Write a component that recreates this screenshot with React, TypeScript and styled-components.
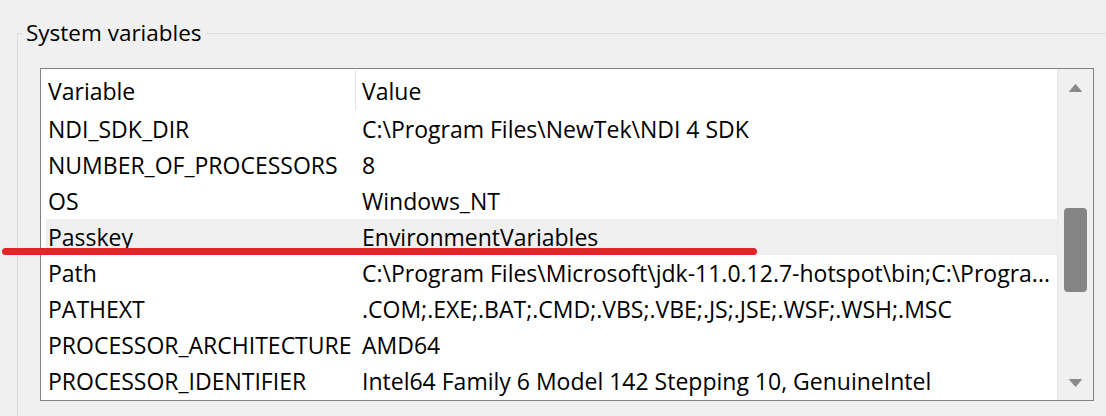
import React from "react";
import styled, { createGlobalStyle } from "styled-components";

const Global = createGlobalStyle`
  html, body { margin: 0; padding: 0; background: #f0f0f0; }
  body { font-family: "Open Sans", "Noto Sans", sans-serif; color: #000; }
  * { box-sizing: border-box; }
`;

const Page = styled.div`
  position: relative;
  width: 1106px;
  height: 416px;
  overflow: hidden;
  padding: 19px 0 0 17px;
`;

const Group = styled.fieldset`
  margin: 0;
  padding: 0;
  min-width: 0;
  height: 420px;
  border: 1px solid #dcdcdc;
  border-right: none;
  border-bottom: none;
`;

const Legend = styled.legend`
  margin-left: 4px;
  padding: 0 4px;
  font-size: 22.5px;
  line-height: 28px;
  color: #000;
`;

const ListBox = styled.div`
  margin: 21px 0 0 22px;
  width: 1054px;
  height: 333px;
  border: 1px solid #828282;
  background: #fff;
  display: grid;
  grid-template-columns: 1fr 35px;
`;

const List = styled.div`
  display: flex;
  flex-direction: column;
  padding-left: 5px;
  border-right: 1px solid #e8e8e8;
`;

const Header = styled.div`
  height: 42px;
  display: grid;
  grid-template-columns: 310px 1fr;
  font-size: 23px;
`;

const HeadCell = styled.div<{ $first?: boolean }>`
  display: flex;
  align-items: center;
  padding-left: ${(p) => (p.$first ? "2px" : "6px")};
  padding-top: 2px;
  border-right: ${(p) => (p.$first ? "1px solid #e5e5e5" : "none")};
  margin: 1px 0;
  white-space: nowrap;
`;

const Row = styled.div<{ $selected?: boolean }>`
  height: 36px;
  display: grid;
  grid-template-columns: 310px 1fr;
  font-size: 23px;
  background: ${(p) => (p.$selected ? "#f0f0f0" : "transparent")};
`;

const Cell = styled.div<{ $first?: boolean }>`
  display: flex;
  align-items: center;
  padding-left: ${(p) => (p.$first ? "2px" : "6px")};
  padding-top: 0px;
  white-space: nowrap;
  overflow: hidden;
`;

const ScrollBar = styled.div`
  background: #f0f0f0;
  display: flex;
  flex-direction: column;
`;

const ArrowButton = styled.div<{ $h: number }>`
  height: ${(p) => p.$h}px;
  display: flex;
  align-items: center;
  justify-content: center;
`;

const Track = styled.div`
  flex: 1;
  display: flex;
  flex-direction: column;
  align-items: center;
`;

const Thumb = styled.div`
  width: 23px;
  height: 84px;
  border-radius: 4px;
  background: #858585;
`;

const RedMark = styled.div`
  position: absolute;
  left: 2px;
  top: 248px;
  width: 755px;
  height: 7px;
  border-radius: 4px;
  background: #e3242b;
`;

const rows: [string, string][] = [
  ["NDI_SDK_DIR", "C:\\Program Files\\NewTek\\NDI 4 SDK"],
  ["NUMBER_OF_PROCESSORS", "8"],
  ["OS", "Windows_NT"],
  ["Passkey", "EnvironmentVariables"],
  ["Path", "C:\\Program Files\\Microsoft\\jdk-11.0.12.7-hotspot\\bin;C:\\Progra..."],
  ["PATHEXT", ".COM;.EXE;.BAT;.CMD;.VBS;.VBE;.JS;.JSE;.WSF;.WSH;.MSC"],
  ["PROCESSOR_ARCHITECTURE", "AMD64"],
  ["PROCESSOR_IDENTIFIER", "Intel64 Family 6 Model 142 Stepping 10, GenuineIntel"],
];

const Up = () => (
  <svg width="13" height="8" viewBox="0 0 13 8">
    <path d="M6.5 0.5 L12.5 7.5 L0.5 7.5 Z" fill="#8a8a8a" stroke="#8a8a8a" strokeLinejoin="round" />
  </svg>
);

const Down = () => (
  <svg width="13" height="8" viewBox="0 0 13 8">
    <path d="M0.5 0.5 L12.5 0.5 L6.5 7.5 Z" fill="#8a8a8a" stroke="#8a8a8a" strokeLinejoin="round" />
  </svg>
);

export default function App() {
  const thumbOffset = 101;
  return (
    <>
      <Global />
      <Page>
        <Group>
          <Legend>System variables</Legend>
          <ListBox>
            <List>
              <Header>
                <HeadCell $first>Variable</HeadCell>
                <HeadCell>Value</HeadCell>
              </Header>
              {rows.map(([k, v]) => (
                <Row key={k} $selected={k === "Passkey"}>
                  <Cell $first>{k}</Cell>
                  <Cell>{v}</Cell>
                </Row>
              ))}
            </List>
            <ScrollBar>
              <ArrowButton $h={38}>
                <Up />
              </ArrowButton>
              <Track>
                <Thumb style={{ marginTop: thumbOffset }} />
              </Track>
              <ArrowButton $h={34}>
                <Down />
              </ArrowButton>
            </ScrollBar>
          </ListBox>
        </Group>
        <RedMark />
      </Page>
    </>
  );
}
